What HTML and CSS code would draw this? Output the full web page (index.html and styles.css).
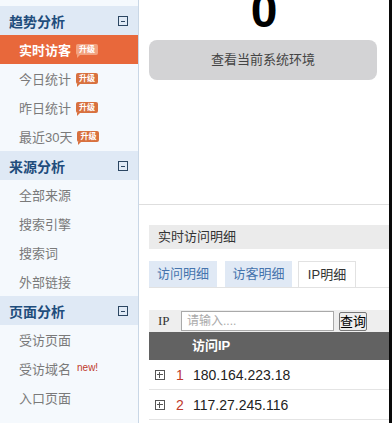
FILE: index.html
```html
<!DOCTYPE html>
<html lang="zh-CN">

<head>
    <meta charset="UTF-8">
    <meta name="viewport" content="width=device-width, initial-scale=1.0">
    <title>实时访客</title>
    <link rel="stylesheet" href="styles.css">
</head>

<body>
    <div class="page">
        <div class="sidebar">
            <div class="nav-head">趋势分析<span class="fold"></span></div>
            <div class="nav-item active">实时访客<span class="badge">升级</span></div>
            <div class="nav-item">今日统计<span class="badge">升级</span></div>
            <div class="nav-item">昨日统计<span class="badge">升级</span></div>
            <div class="nav-item">最近30天<span class="badge">升级</span></div>

            <div class="nav-head">来源分析<span class="fold"></span></div>
            <div class="nav-item">全部来源</div>
            <div class="nav-item">搜索引擎</div>
            <div class="nav-item">搜索词</div>
            <div class="nav-item">外部链接</div>

            <div class="nav-head">页面分析<span class="fold"></span></div>
            <div class="nav-item">受访页面</div>
            <div class="nav-item">受访域名<span class="new">new!</span></div>
            <div class="nav-item">入口页面</div>
        </div>

        <div class="main">
            <div class="count">0</div>
            <div class="env-btn">查看当前系统环境</div>

            <div class="divider"></div>

            <div class="block-title">实时访问明细</div>

            <div class="tabs">
                <div class="tab">访问明细</div>
                <div class="tab">访客明细</div>
                <div class="tab current">IP明细</div>
            </div>

            <div class="search">
                <span class="search-label">IP</span>
                <input class="search-input" type="text" placeholder="请输入....">
                <button class="search-btn">查询</button>
            </div>

            <div class="table-head">访问IP</div>
            <div class="ip-list">
            </div>
        </div>

        <div class="edge"></div>
    </div>
    <script>
        (() => {
            const ips = ['180.164.223.18', '117.27.245.116'],
                list = document.querySelector('.ip-list')

            // 每一行的模板
            function rowTpl(ip, index) {
                return `<div class="ip-row"><span class="plus"></span><span class="num">${index + 1}</span><span class="ip">${ip}</span></div>`
            }

            let html = ''
            ips.forEach((ip, index) => {
                html += rowTpl(ip, index)
            })
            list.innerHTML = html
        })();
    </script>
</body>

</html>
```

FILE: styles.css
```css
html,
body {
    margin: 0;
    height: 100%;
    overflow: hidden;
}

body {
    font-family: "Liberation Sans", "Noto Sans CJK SC", sans-serif;
    background-color: #fff;
}

.page {
    display: flex;
    height: 100%;
}

/* 左边菜单 */
.sidebar {
    width: 138px;
    flex-shrink: 0;
    padding-top: 6px;
    background-color: #f5f9fd;
    border-right: 1px solid #c9d7e6;
}

.nav-head {
    display: flex;
    align-items: center;
    height: 29px;
    padding: 0 10px 0 9px;
    background-color: #dfe9f5;
    color: #1f4d7c;
    font-size: 14px;
    font-weight: bold;
}

.fold {
    margin-left: auto;
    width: 8px;
    height: 8px;
    border: 1px solid #2b4662;
    position: relative;
}

.fold::after {
    content: "";
    position: absolute;
    left: 2px;
    top: 4px;
    width: 4px;
    height: 1px;
    background-color: #2b4662;
}

.nav-item {
    display: flex;
    align-items: center;
    height: 29px;
    padding-left: 19px;
    color: #7a7a7a;
    font-size: 13px;
}

.nav-item.active {
    background-color: #e8683b;
    color: #fff;
    font-weight: bold;
}

.badge {
    position: relative;
    margin-left: 5px;
    padding: 0 3px;
    height: 11px;
    line-height: 11px;
    border-radius: 2px;
    background-color: #d8713f;
    color: #fff;
    font-size: 8px;
    font-weight: bold;
}

.badge::after {
    content: "";
    position: absolute;
    left: 1px;
    bottom: -3px;
    border-top: 3px solid #d8713f;
    border-right: 3px solid transparent;
}

.active .badge {
    background-color: #f2a27f;
}

.active .badge::after {
    border-top-color: #f2a27f;
}

.new {
    margin-left: 6px;
    margin-top: -2px;
    color: #c0392b;
    font-size: 10px;
}

/* 右边内容 */
.main {
    flex: 1;
    min-width: 0;
    display: flex;
    flex-direction: column;
    padding-left: 10px;
}

.count {
    height: 28px;
    line-height: 22px;
    font-size: 48px;
    font-weight: bold;
    color: #000;
    text-align: center;
    padding-right: 10px;
}

.env-btn {
    margin-top: 12px;
    width: 228px;
    height: 40px;
    line-height: 40px;
    border-radius: 8px;
    background-color: #d3d3d5;
    color: #444;
    font-size: 13px;
    text-align: center;
}

.divider {
    margin: 124px 0 0 -10px;
    border-top: 1px solid #dedede;
}

.block-title {
    margin-top: 20px;
    height: 24px;
    line-height: 24px;
    padding-left: 9px;
    background-color: #ebebeb;
    color: #333;
    font-size: 13px;
}

.tabs {
    display: flex;
    margin-top: 12px;
    height: 26px;
    border-bottom: 1px solid #e2e2e2;
}

.tab {
    width: 68px;
    line-height: 26px;
    margin-right: 8px;
    background-color: #e0e9f5;
    color: #4674ad;
    font-size: 13px;
    text-align: center;
}

.tab:nth-child(2) {
    width: 67px;
    margin-right: 6px;
}

.tab.current {
    width: 56px;
    background-color: #fff;
    border: 1px solid #e2e2e2;
    border-bottom: none;
    color: #333;
}

.search {
    display: flex;
    align-items: center;
    margin-top: 22px;
    height: 22px;
    background-color: #eeeeee;
    font-size: 13px;
}

.search-label {
    width: 23px;
    padding-left: 9px;
    color: #333;
    font-family: "Liberation Serif", "Noto Sans CJK SC", serif;
}

.search-input {
    width: 153px;
    height: 20px;
    margin: 0;
    padding: 0 5px;
    box-sizing: border-box;
    border: 1px solid #a9a9a9;
    font-size: 12px;
    font-family: inherit;
}

.search-input::placeholder {
    color: #aaa;
}

.search-btn {
    margin-left: 5px;
    width: 28px;
    height: 19px;
    padding: 0;
    border: 1px solid #777;
    border-radius: 2px;
    background-color: #eee;
    color: #000;
    font-size: 13px;
    line-height: 17px;
    font-family: inherit;
}

.table-head {
    height: 28px;
    line-height: 28px;
    padding-left: 43px;
    background-color: #626262;
    color: #fff;
    font-size: 13px;
    font-weight: bold;
}

.ip-row {
    display: flex;
    align-items: center;
    height: 29px;
    border-bottom: 1px solid #e4e4e4;
    font-size: 14px;
    color: #222;
}

.plus {
    position: relative;
    margin-left: 6px;
    width: 8px;
    height: 8px;
    border: 1px solid #555;
}

.plus::before,
.plus::after {
    content: "";
    position: absolute;
    background-color: #555;
}

.plus::before {
    left: 1px;
    top: 3px;
    width: 6px;
    height: 1px;
}

.plus::after {
    left: 3px;
    top: 1px;
    width: 1px;
    height: 6px;
}

.num {
    width: 17px;
    margin-left: 11px;
    color: #c0392b;
}

.edge {
    width: 3px;
    flex-shrink: 0;
    background-color: #0a0a0a;
}
```
